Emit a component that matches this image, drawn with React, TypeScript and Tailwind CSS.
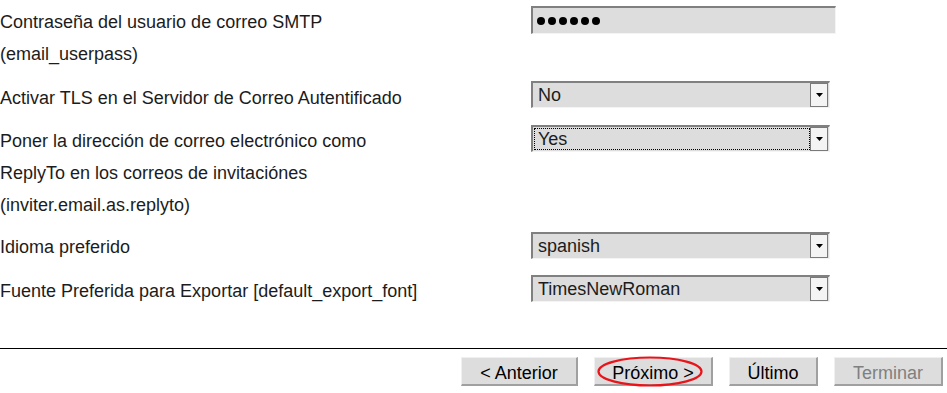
import React from "react";

interface Row {
  label: string[];
  kind: "password" | "select";
  value: string;
  focused?: boolean;
  mt: string;
  ctl: string;
}

const rows: Row[] = [
  { label: ["Contraseña del usuario de correo SMTP", "(email_userpass)"], kind: "password", value: "", mt: "mt-[6px]", ctl: "" },
  { label: ["Activar TLS en el Servidor de Correo Autentificado"], kind: "select", value: "No", mt: "mt-[12px]", ctl: "-mt-[1px]" },
  {
    label: ["Poner la dirección de correo electrónico como", "ReplyTo en los correos de invitaciónes", "(inviter.email.as.replyto)"],
    kind: "select",
    value: "Yes",
    focused: true,
    mt: "mt-[11px]",
    ctl: "",
  },
  { label: ["Idioma preferido"], kind: "select", value: "spanish", mt: "mt-[10px]", ctl: "mt-[1px]" },
  { label: ["Fuente Preferida para Exportar [default_export_font]"], kind: "select", value: "TimesNewRoman", mt: "mt-[12px]", ctl: "" },
];

function Arrow() {
  return (
    <div className="flex h-[24px] w-[18px] items-center justify-center border border-[#7a7a7a] bg-[#f4f4f4]">
      <svg width="7" height="4" viewBox="0 0 7 4">
        <path d="M0 0h7L3.5 4z" fill="#000" />
      </svg>
    </div>
  );
}

function Select({ value, focused }: { value: string; focused?: boolean }) {
  return (
    <div className="flex h-[27px] w-[299px] items-center border-t-2 border-l-2 border-b border-r border-t-[#808080] border-l-[#808080] border-b-[#f4f4f4] border-r-[#f4f4f4] bg-[#dddddd] pr-[1px] text-[18px]">
      <div
        className={
          focused
            ? "ml-[1px] flex h-[22px] flex-1 items-center border border-dotted border-black pl-[3px]"
            : "ml-[1px] flex h-[22px] flex-1 items-center pl-[4px]"
        }
      >
        {value}
      </div>
      <Arrow />
    </div>
  );
}

function Password() {
  return (
    <div className="flex h-[28px] w-[305px] items-center gap-[3px] border-t-2 border-l-2 border-b border-r border-t-[#808080] border-l-[#808080] border-b-[#f4f4f4] border-r-[#f4f4f4] bg-[#dddddd] pl-[4px]">
      {[0, 1, 2, 3, 4, 5].map((i) => (
        <span key={i} className="block h-[8px] w-[8px] rounded-full bg-black" />
      ))}
    </div>
  );
}

function Btn({ label, w, disabled, circled }: { label: string; w: string; disabled?: boolean; circled?: boolean }) {
  return (
    <div className="relative">
      <button
        className={
          "h-[29px] border-t border-l border-b-2 border-r-2 border-t-[#f0f0f0] border-l-[#f0f0f0] border-b-[#a0a0a0] border-r-[#a0a0a0] bg-[#dddddd] pt-[3px] text-[18px] leading-none " +
          w +
          (disabled ? " text-[#808080]" : " text-black")
        }
      >
        {label}
      </button>
      {circled && (
        <svg className="absolute left-[3px] top-[-1px]" width="106" height="31" viewBox="0 0 106 31">
          <ellipse cx="53" cy="15.5" rx="51.5" ry="14" fill="none" stroke="#e8141a" strokeWidth="2.2" />
        </svg>
      )}
    </div>
  );
}

export default function App() {
  return (
    <div className="h-[393px] w-[947px] overflow-hidden bg-white font-['Liberation_Sans',Arial,sans-serif] text-[18px] text-[#1c1c1c]">
      <div className="flex flex-col">
        {rows.map((row, idx) => (
          <div key={idx} className={"flex items-start " + row.mt}>
            <div className="w-[531px] leading-[32px]">
              {row.label.map((l, i) => (
                <div key={i}>{l}</div>
              ))}
            </div>
            <div className={row.ctl}>
              {row.kind === "password" ? <Password /> : <Select value={row.value} focused={row.focused} />}
            </div>
          </div>
        ))}
      </div>
      <div className="mt-[41px] h-px w-full bg-black" />
      <div className="mt-[8px] flex justify-end gap-[16px] pr-[4px]">
        <Btn label="< Anterior" w="w-[117px]" />
        <Btn label="Próximo >" w="w-[119px]" circled />
        <Btn label="Último" w="w-[89px]" />
        <Btn label="Terminar" w="w-[109px]" disabled />
      </div>
    </div>
  );
}
